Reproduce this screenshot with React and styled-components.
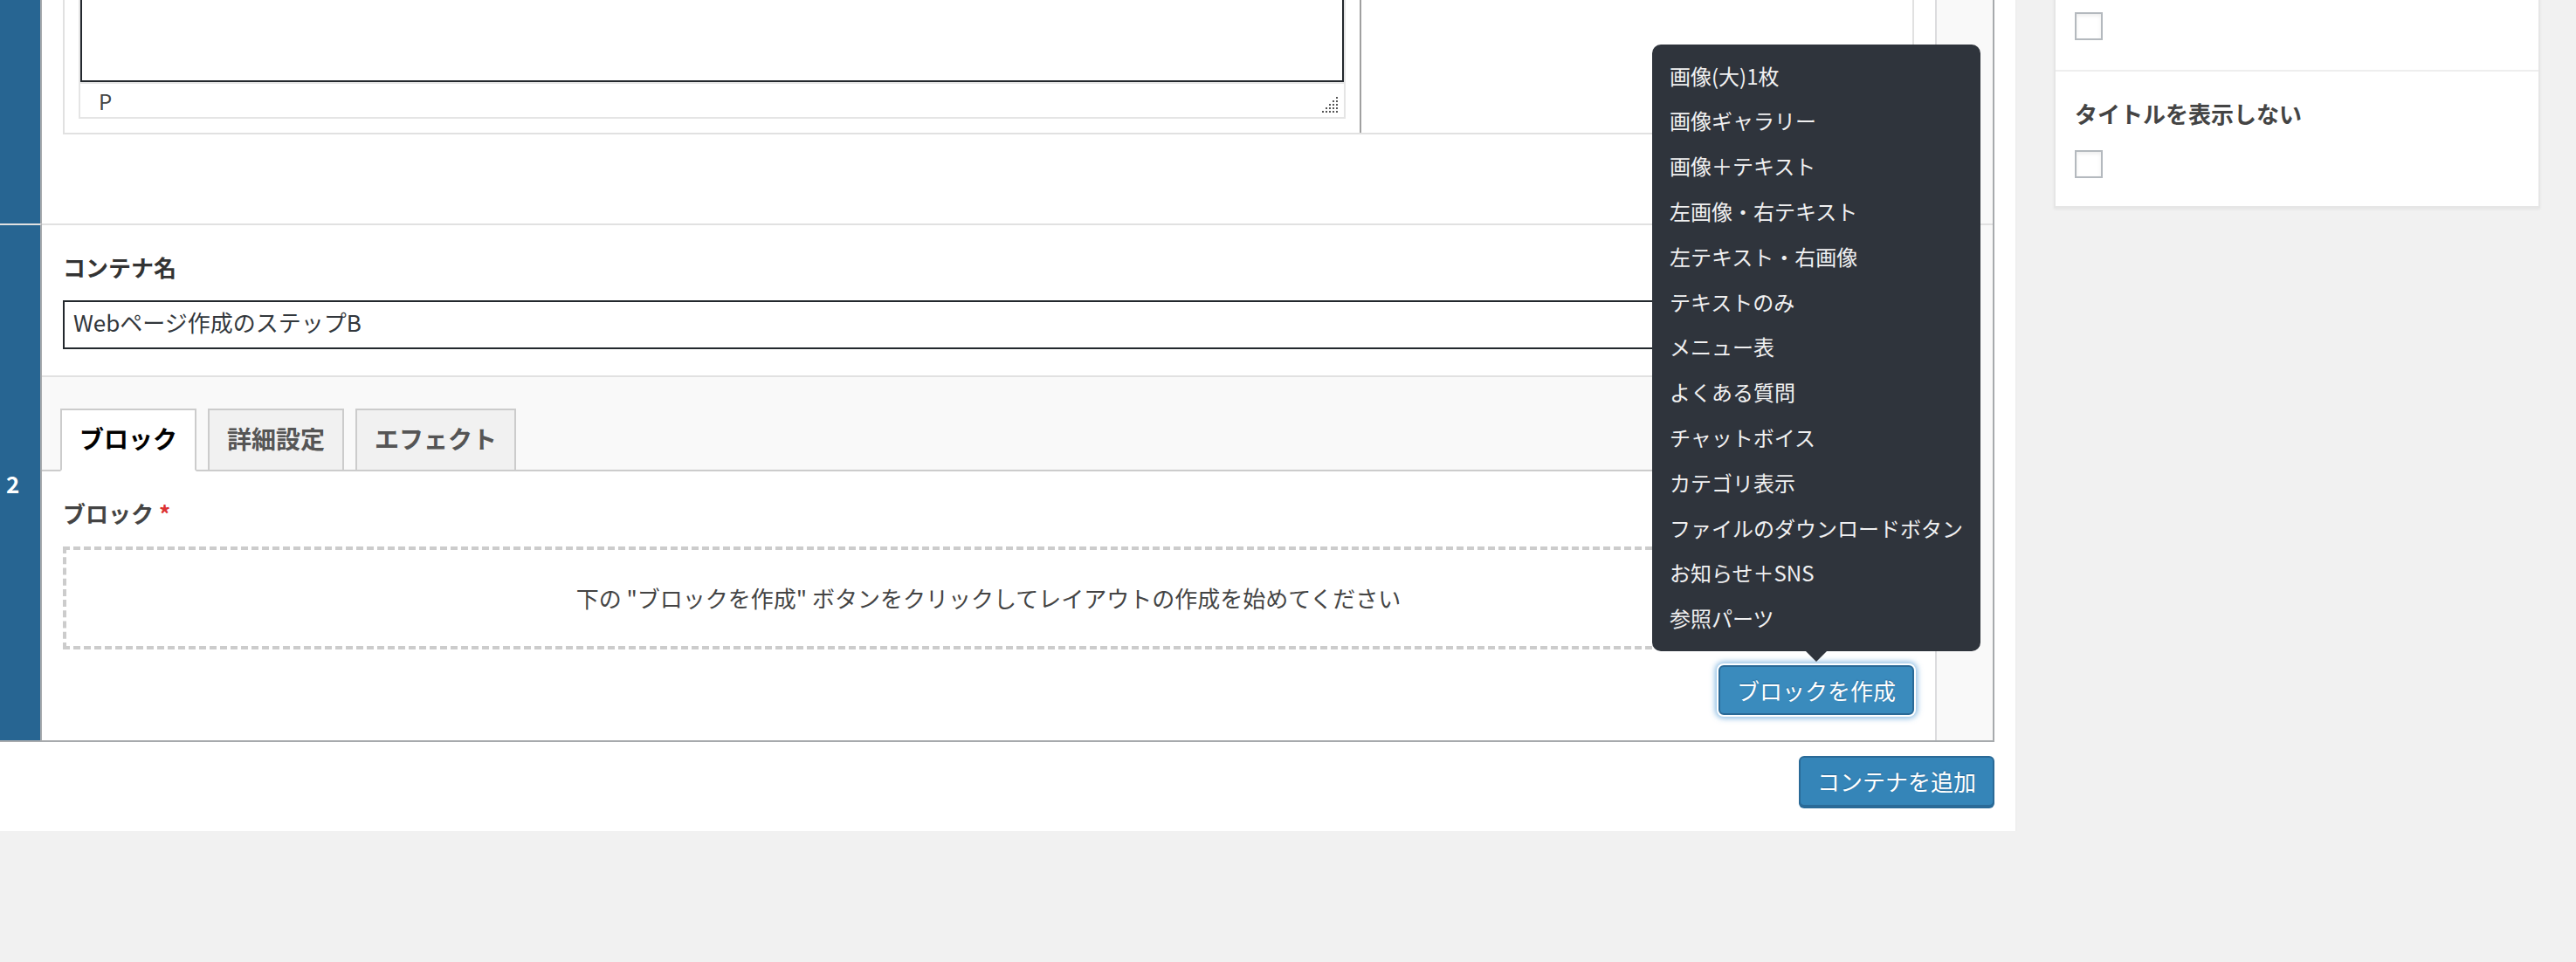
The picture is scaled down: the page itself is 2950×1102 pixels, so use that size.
import React from 'react'
import styled, { createGlobalStyle } from 'styled-components'

const GlobalStyle = createGlobalStyle`
  body {
    margin: 0;
    background: #f1f1f1;
    overflow: hidden;
    font-family: "Noto Sans CJK JP", "Noto Sans", sans-serif;
    color: #444;
  }
  * { box-sizing: border-box; }
`

const Page = styled.div`
  display: flex;
  align-items: flex-start;
  gap: 44px;
  margin-top: -700px;
`

const Main = styled.div`
  width: 2308px;
  flex: none;
  background: #fff;
  box-shadow: 0 2px 3px rgba(0, 0, 0, 0.05);
  padding: 0 24px 28px 0;
`

const RepeaterTable = styled.div`
  display: flex;
  flex-direction: column;
  border-right: 2px solid #a7aaad;
  border-bottom: 2px solid #a7aaad;
`

const Row = styled.div`
  display: flex;
  align-items: stretch;
  & > * {
    border-top: ${(p) => (p.$divided ? '2px solid #e1e1e1' : 'none')};
  }
`

const OrderCell = styled.div`
  width: 48px;
  flex: none;
  background: #276592;
  border-right: 2px solid #a7aaad;
  color: #fff;
  font-size: 26px;
  font-weight: 700;
  display: flex;
  align-items: center;
  padding-left: 7px;
`

const ContentCell = styled.div`
  flex: 1;
  min-width: 0;
  background: #fff;
`

const HandleCell = styled.div`
  width: 66px;
  flex: none;
  background: #f9f9f9;
  border-left: 2px solid #dcdcde;
`

const Row1Body = styled.div`
  padding: 30px 24px 102px;
`

const FieldBox = styled.div`
  display: flex;
  border: 2px solid #e1e1e1;
`

const EditorCol = styled.div`
  width: 1483px;
  flex: none;
  padding: 16px;
`

const EditorWrap = styled.div`
  border: 2px solid #e5e5e5;
  display: flex;
  flex-direction: column;
`

const EditorArea = styled.div`
  height: 744px;
  border: 2px solid #23282d;
  background: #fff;
`

const StatusBar = styled.div`
  height: 40px;
  border-top: 2px solid #e5e5e5;
  display: flex;
  align-items: center;
  justify-content: space-between;
  padding: 0 7px 0 21px;
  font-size: 24px;
  color: #444;
`

const Grip = styled.svg`
  align-self: flex-end;
  margin-bottom: 5px;
`

const SideCol = styled.div`
  flex: 1;
  border-left: 2px solid #a0a0a0;
`

const Field = styled.div`
  padding: 30px 24px;
`

const Label = styled.div`
  font-size: 26px;
  font-weight: 700;
  line-height: 36px;
  color: ${(p) => p.$color || '#444'};
  margin-bottom: 20px;
`

const Required = styled.span`
  color: #dc3232;
  margin-left: 6px;
`

const TextInput = styled.div`
  height: 56px;
  border: 2px solid #23282d;
  padding: 0 10px;
  font-size: 26px;
  line-height: 46px;
  color: #32373c;
`

const TabGroup = styled.div`
  background: #f9f9f9;
  border-top: 2px solid #e1e1e1;
  padding-top: 36px;
`

const TabList = styled.div`
  display: flex;
  gap: 13px;
  padding-left: 21px;
  height: 72px;
  border-bottom: 2px solid #ccc;
`

const Tab = styled.div`
  height: 72px;
  padding: 0 20px;
  border: 2px solid #ccc;
  border-bottom-color: ${(p) => (p.$active ? '#fff' : '#ccc')};
  background: ${(p) => (p.$active ? '#fff' : '#f1f1f1')};
  color: ${(p) => (p.$active ? '#000' : '#555')};
  font-size: 28px;
  font-weight: 700;
  line-height: 64px;
  margin-bottom: -2px;
`

const TabPanel = styled.div`
  background: #fff;
  padding: 30px 24px 29px;
`

const EmptyMessage = styled.div`
  border: 4px dashed #ccc;
  padding: 37px;
  text-align: center;
  font-size: 26px;
  line-height: 36px;
  color: #444;
`

const Actions = styled.div`
  display: flex;
  justify-content: flex-end;
  margin-top: 18px;
`

const ButtonWrap = styled.div`
  position: relative;
  display: flex;
`

const PrimaryButton = styled.button`
  height: ${(p) => (p.$focused ? '57px' : '58px')};
  padding: 0 19px;
  border: 2px solid #2a6a97;
  border-radius: 6px;
  background: ${(p) => (p.$focused ? '#3a8bbd' : '#3585b8')};
  color: #fff;
  font-family: inherit;
  font-size: 26px;
  line-height: 1;
  text-shadow: 0 -1px 1px #2a6a97;
  box-shadow: ${(p) =>
    p.$focused
      ? '0 0 0 2px #fff, 0 0 6px 4px rgba(91, 160, 215, 0.7)'
      : '0 2px 0 #2a6a97'};
  cursor: pointer;
`

const Tooltip = styled.div`
  position: absolute;
  bottom: calc(100% + 16px);
  left: 50%;
  transform: translateX(-50%);
  width: 376px;
  padding: 10px 20px 12px;
  background: #2f343c;
  border-radius: 10px;
  z-index: 10;

  &::after {
    content: '';
    position: absolute;
    top: 100%;
    left: 50%;
    margin-left: -12px;
    border: 12px solid transparent;
    border-top-color: #2f343c;
    border-bottom: none;
  }
`

const TooltipItem = styled.div`
  font-size: 24px;
  line-height: 51.8px;
  color: #f0f0f1;
  white-space: nowrap;
`

const Footer = styled.div`
  display: flex;
  justify-content: flex-end;
  padding-top: 16px;
`

const Sidebar = styled.div`
  width: 557px;
  flex: none;
  padding-top: 626px;
`

const Card = styled.div`
  background: #fff;
  border: 2px solid #e6e6e6;
  box-shadow: 0 2px 3px rgba(0, 0, 0, 0.05);
`

const CardSection = styled.div`
  padding: ${(p) => (p.$divided ? '30px 22px 32px' : '86px 22px 34px')};
  border-top: ${(p) => (p.$divided ? '2px solid #eee' : 'none')};
`

const CardLabel = styled.div`
  font-size: 26px;
  font-weight: 700;
  line-height: 36px;
  color: #444;
  margin-bottom: 24px;
`

const Checkbox = styled.div`
  width: 32px;
  height: 32px;
  border: 2px solid #b4b9be;
  background: #fff;
  box-shadow: inset 0 2px 4px rgba(0, 0, 0, 0.08);
`

const blockTypes = [
  '画像(大)1枚',
  '画像ギャラリー',
  '画像＋テキスト',
  '左画像・右テキスト',
  '左テキスト・右画像',
  'テキストのみ',
  'メニュー表',
  'よくある質問',
  'チャットボイス',
  'カテゴリ表示',
  'ファイルのダウンロードボタン',
  'お知らせ＋SNS',
  '参照パーツ',
]

const gripDots = [
  [16, 0],
  [12, 4], [16, 4],
  [8, 8], [12, 8], [16, 8],
  [4, 12], [8, 12], [12, 12], [16, 12],
  [0, 16], [4, 16], [8, 16], [12, 16], [16, 16],
]

const ResizeGrip = () => (
  <Grip width="18" height="18" viewBox="0 0 18 18">
    {gripDots.map(([x, y]) => (
      <rect key={`${x}-${y}`} x={x} y={y} width="2" height="2" fill="#555" />
    ))}
  </Grip>
)

export default function App() {
  return (
    <>
      <GlobalStyle />
      <Page>
        <Main>
          <RepeaterTable>
            <Row>
              <OrderCell />
              <ContentCell>
                <Row1Body>
                  <FieldBox>
                    <EditorCol>
                      <EditorWrap>
                        <EditorArea />
                        <StatusBar>
                          <span>P</span>
                          <ResizeGrip />
                        </StatusBar>
                      </EditorWrap>
                    </EditorCol>
                    <SideCol />
                  </FieldBox>
                </Row1Body>
              </ContentCell>
              <HandleCell />
            </Row>
            <Row $divided>
              <OrderCell>2</OrderCell>
              <ContentCell>
                <Field>
                  <Label $color="#333">コンテナ名</Label>
                  <TextInput>Webページ作成のステップB</TextInput>
                </Field>
                <TabGroup>
                  <TabList>
                    <Tab $active>ブロック</Tab>
                    <Tab>詳細設定</Tab>
                    <Tab>エフェクト</Tab>
                  </TabList>
                  <TabPanel>
                    <Label>
                      ブロック<Required>*</Required>
                    </Label>
                    <EmptyMessage>
                      下の "ブロックを作成" ボタンをクリックしてレイアウトの作成を始めてください
                    </EmptyMessage>
                    <Actions>
                      <ButtonWrap>
                        <Tooltip>
                          {blockTypes.map((name) => (
                            <TooltipItem key={name}>{name}</TooltipItem>
                          ))}
                        </Tooltip>
                        <PrimaryButton $focused>ブロックを作成</PrimaryButton>
                      </ButtonWrap>
                    </Actions>
                  </TabPanel>
                </TabGroup>
              </ContentCell>
              <HandleCell />
            </Row>
          </RepeaterTable>
          <Footer>
            <PrimaryButton>コンテナを追加</PrimaryButton>
          </Footer>
        </Main>
        <Sidebar>
          <Card>
            <CardSection>
              <Checkbox />
            </CardSection>
            <CardSection $divided>
              <CardLabel>タイトルを表示しない</CardLabel>
              <Checkbox />
            </CardSection>
          </Card>
        </Sidebar>
      </Page>
    </>
  )
}
